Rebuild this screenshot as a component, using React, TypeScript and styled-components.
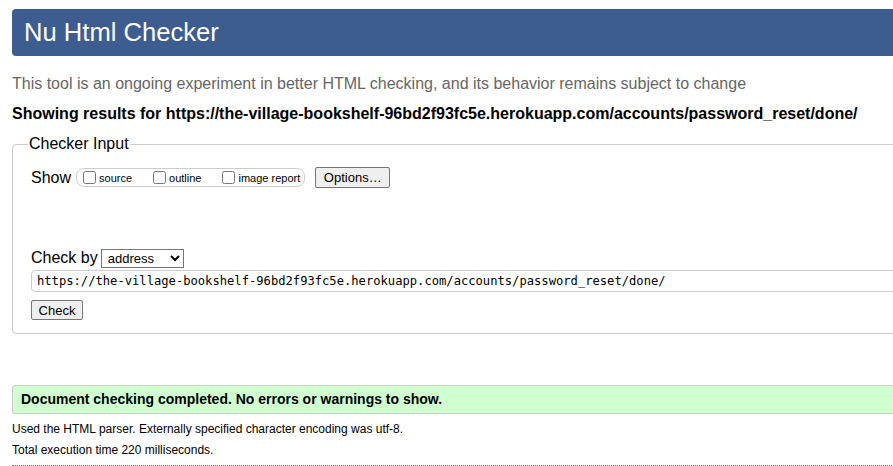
import React from "react";
import styled, { createGlobalStyle } from "styled-components";

const Global = createGlobalStyle`
  html, body { margin: 0; padding: 0; overflow: hidden; background: #fff; }
  body { font-family: "Liberation Sans", Arial, sans-serif; color: #000; }
`;

const Page = styled.div`
  width: 1100px;
  padding: 9px 12px 0;
`;

const Header = styled.h1`
  margin: 0;
  height: 47px;
  line-height: 47px;
  padding: 0 12px;
  background: #3d5d91;
  color: #fff;
  font-weight: normal;
  font-size: 25.6px;
  border-radius: 4px;
`;

const Intro = styled.p`
  margin: 18px 0 0;
  font-size: 16px;
  line-height: 20px;
  color: #666;
`;

const Results = styled.p`
  margin: 10px 0 0;
  font-size: 16px;
  line-height: 20px;
  font-weight: bold;
`;

const Fieldset = styled.fieldset`
  margin: 11px 0 0;
  padding: 0 18px 13px;
  border: 1px solid #ccc;
  border-radius: 4px;
`;

const Legend = styled.legend`
  font-size: 16px;
  padding: 0 1px;
  margin-left: -3px;
`;

const ShowRow = styled.div`
  display: flex;
  align-items: center;
  height: 21px;
  margin-top: 14px;
`;

const Label = styled.span<{ $gap: number }>`
  font-size: 16px;
  margin-right: ${(p) => p.$gap}px;
`;

const CheckGroup = styled.span`
  display: inline-flex;
  align-items: center;
  height: 17px;
  border: 1px solid #ccc;
  border-radius: 8px;
  padding: 0 4px 0 2px;
`;

const CheckLabel = styled.label<{ $gap: number }>`
  display: inline-flex;
  align-items: center;
  font-size: 11px;
  margin-right: ${(p) => p.$gap}px;
  input { margin: 0 3px 0 4px; width: 13px; height: 13px; }
`;

const Button = styled.button`
  font-family: "Liberation Sans", Arial, sans-serif;
  font-size: 13px;
  color: #000;
  background: #efefef;
  border: 1px solid #767676;
  border-radius: 2px;
  padding: 0 6px;
  height: 21px;
`;

const OptionsButton = styled(Button)`
  margin-left: 10px;
  height: 21px;
  width: 75px;
`;

const CheckByRow = styled.div`
  display: flex;
  align-items: center;
  height: 20px;
  margin-top: 60px;
`;

const Select = styled.select`
  font-family: "Liberation Sans", Arial, sans-serif;
  font-size: 13px;
  height: 19px;
  width: 83px;
  margin: 0;
  border: 1px solid #767676;
  border-radius: 0;
  padding: 0 0 0 2px;
  background: #fff;
  color: #000;
`;

const UrlInput = styled.input`
  display: block;
  box-sizing: border-box;
  margin-top: 2px;
  width: 1100px;
  height: 22px;
  border: 1px solid #ccc;
  border-radius: 4px;
  padding: 0 5px;
  font-family: "DejaVu Sans Mono", "Liberation Mono", monospace;
  font-size: 12.15px;
  color: #000;
  outline: none;
`;

const CheckButton = styled(Button)`
  display: block;
  margin-top: 8px;
  height: 20px;
  width: 52px;
  padding: 0;
`;

const Success = styled.div`
  margin-top: 51px;
  height: 27px;
  line-height: 27px;
  background: #d0ffd0;
  border: 1px solid #ccc;
  border-right: none;
  border-radius: 3px 0 0 3px;
  padding-left: 8px;
  font-size: 14px;
  font-weight: bold;
`;

const Note = styled.p<{ $first?: boolean }>`
  margin: ${(p) => (p.$first ? "5px" : "0")} 0 0;
  font-size: 12px;
  line-height: 21px;
  color: #000;
`;

const Divider = styled.hr`
  margin: 4px 0 0;
  border: none;
  border-top: 1px dotted #666;
  height: 0;
`;

export default function App() {
  const url =
    "https://the-village-bookshelf-96bd2f93fc5e.herokuapp.com/accounts/password_reset/done/";
  return (
    <>
      <Global />
      <Page>
        <Header>Nu Html Checker</Header>
        <Intro>
          This tool is an ongoing experiment in better HTML checking, and its
          behavior remains subject to change
        </Intro>
        <Results>Showing results for {url}</Results>
        <Fieldset>
          <Legend>Checker Input</Legend>
          <ShowRow>
            <Label $gap={5}>Show</Label>
            <CheckGroup>
              <CheckLabel $gap={17}>
                <input type="checkbox" />
                source
              </CheckLabel>
              <CheckLabel $gap={17}>
                <input type="checkbox" />
                outline
              </CheckLabel>
              <CheckLabel $gap={0}>
                <input type="checkbox" />
                image report
              </CheckLabel>
            </CheckGroup>
            <OptionsButton>Options…</OptionsButton>
          </ShowRow>
          <CheckByRow>
            <Label $gap={3}>Check by</Label>
            <Select defaultValue="address">
              <option value="address">address</option>
              <option value="file">file upload</option>
              <option value="text">text input</option>
            </Select>
          </CheckByRow>
          <UrlInput defaultValue={url} />
          <CheckButton>Check</CheckButton>
        </Fieldset>
        <Success>
          Document checking completed. No errors or warnings to show.
        </Success>
        <Note $first>
          Used the HTML parser. Externally specified character encoding was
          utf-8.
        </Note>
        <Note>Total execution time 220 milliseconds.</Note>
        <Divider />
      </Page>
    </>
  );
}
